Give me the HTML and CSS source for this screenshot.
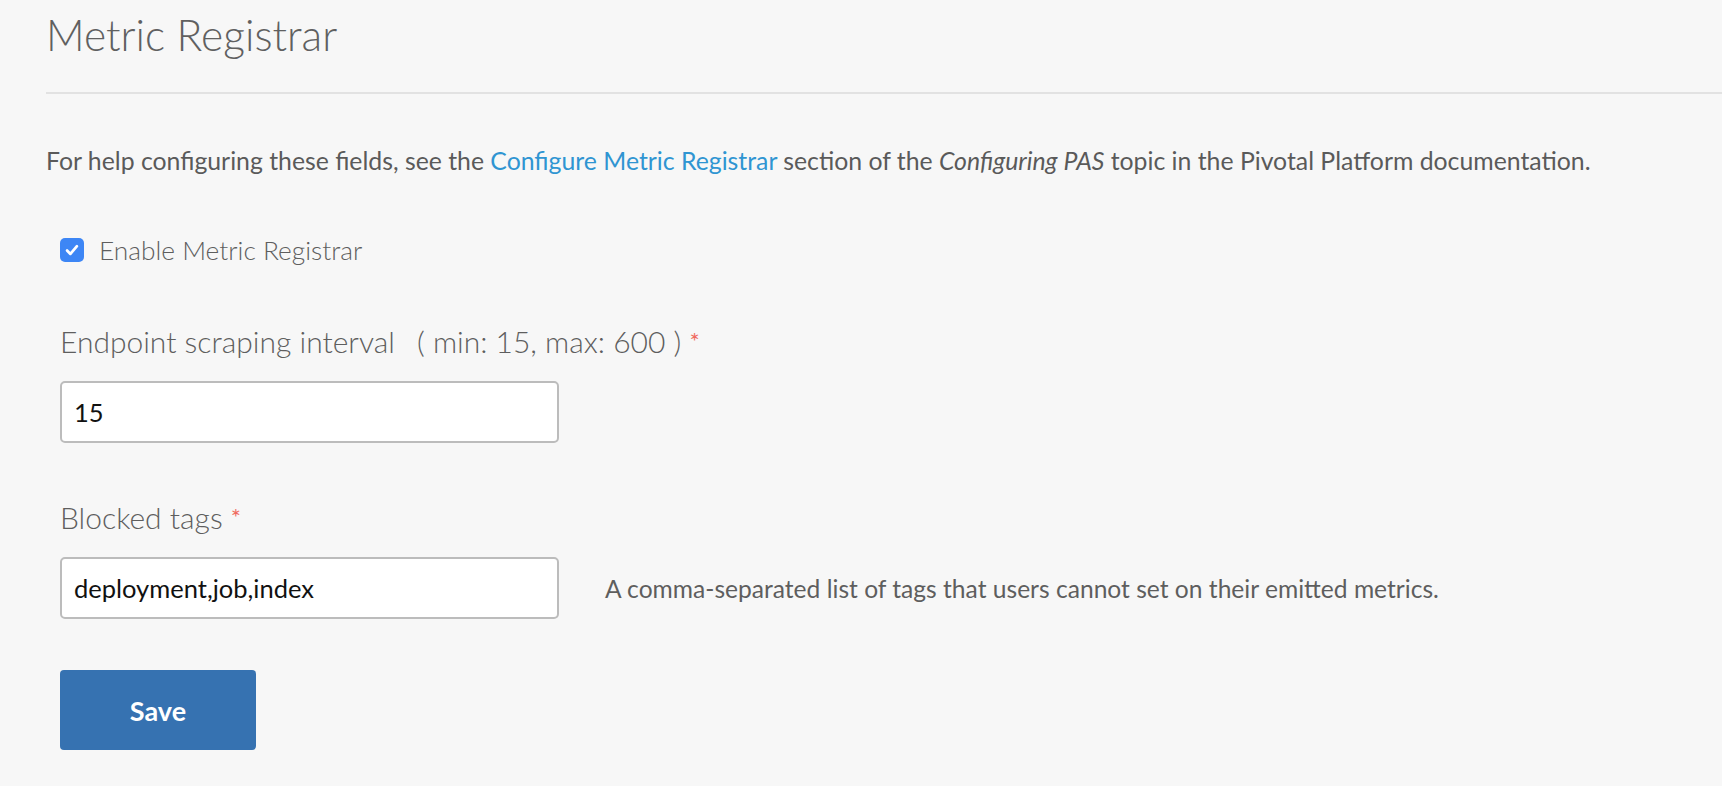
FILE: index.html
```html
<!DOCTYPE html>
<html lang="en">
<head>
<meta charset="utf-8">
<title>Metric Registrar</title>
<link rel="stylesheet" href="styles.css">
</head>
<body>
<div class="page">
  <h1 class="title">Metric Registrar</h1>
  <hr class="rule">
  <p class="help">For help configuring these fields, see the <a class="link" href="#">Configure Metric Registrar</a> section of the <em>Configuring PAS</em> topic in the Pivotal Platform documentation.</p>
  <form class="form">
    <label class="check-row">
      <span class="check-box"><svg width="18" height="18" viewBox="0 0 16 16"><path d="M3.6 8.4 L6.6 11.5 L12.4 4.6" fill="none" stroke="#fff" stroke-width="2.4" stroke-linecap="round" stroke-linejoin="round"/></svg></span>
      <span class="check-label">Enable Metric Registrar</span>
    </label>
    <div class="field">
      <div class="field-label">Endpoint scraping interval <span class="range">( min: 15, max: 600 )</span> <span class="req">*</span></div>
      <div class="field-row">
        <input class="text-input" type="text" value="15">
      </div>
    </div>
    <div class="field">
      <div class="field-label">Blocked tags <span class="req">*</span></div>
      <div class="field-row">
        <input class="text-input" type="text" value="deployment,job,index">
        <span class="hint">A comma-separated list of tags that users cannot set on their emitted metrics.</span>
      </div>
    </div>
    <button class="save" type="button">Save</button>
  </form>
</div>
</body>
</html>
```
FILE: styles.css
```css
html, body {
  margin: 0;
  padding: 0;
  background: #f7f7f7;
}
body {
  font-family: Lato, "Open Sans", sans-serif;
  color: #5e5e5e;
}
.page {
  padding-left: 46px;
}
.title {
  margin: 0;
  padding-top: 8px;
  font-size: 42.5px;
  font-weight: 300;
  line-height: 54px;
  color: #606060;
}
.rule {
  margin: 30px 0 0 0;
  border: 0;
  height: 2px;
  background: #e2e2e2;
}
.help {
  margin: 0;
  padding-top: 52px;
  font-size: 24.8px;
  line-height: 30px;
  color: #5a5a5a;
  white-space: nowrap;
}
.link {
  color: #2f95d2;
  text-decoration: none;
}
.help em {
  font-style: italic;
}
.form {
  padding-left: 14px;
}
.check-row {
  display: flex;
  align-items: center;
  gap: 15px;
  margin-top: 59px;
  height: 30px;
}
.check-box {
  width: 24px;
  height: 24px;
  border-radius: 5px;
  background: #3d86f5;
  display: flex;
  align-items: center;
  justify-content: center;
}
.check-label {
  font-size: 26.3px;
  font-weight: 300;
  color: #5e5e5e;
}
.field {
  margin-top: 58px;
}
.field + .field {
  margin-top: 56px;
}
.field-label {
  font-size: 30px;
  font-weight: 300;
  line-height: 36px;
  color: #5e5e5e;
}
.range {
  margin-left: 14px;
}
.req {
  color: #f06a60;
  font-size: 24px;
  vertical-align: top;
  font-weight: 400;
}
.field-row {
  display: flex;
  align-items: center;
  gap: 46px;
  margin-top: 22px;
}
.text-input {
  box-sizing: border-box;
  width: 499px;
  height: 62px;
  border: 2px solid #bcbcbc;
  border-radius: 5px;
  background: #fff;
  padding: 0 12px;
  font-family: Lato, "Open Sans", sans-serif;
  font-size: 25.5px;
  color: #111;
  outline: none;
}
.hint {
  font-size: 24.6px;
  color: #5e5e5e;
}
.save {
  margin-top: 51px;
  width: 196px;
  height: 80px;
  border: 0;
  border-radius: 4px;
  background: #3672b1;
  color: #fff;
  font-family: Lato, "Open Sans", sans-serif;
  font-size: 27px;
  font-weight: 700;
}
```
